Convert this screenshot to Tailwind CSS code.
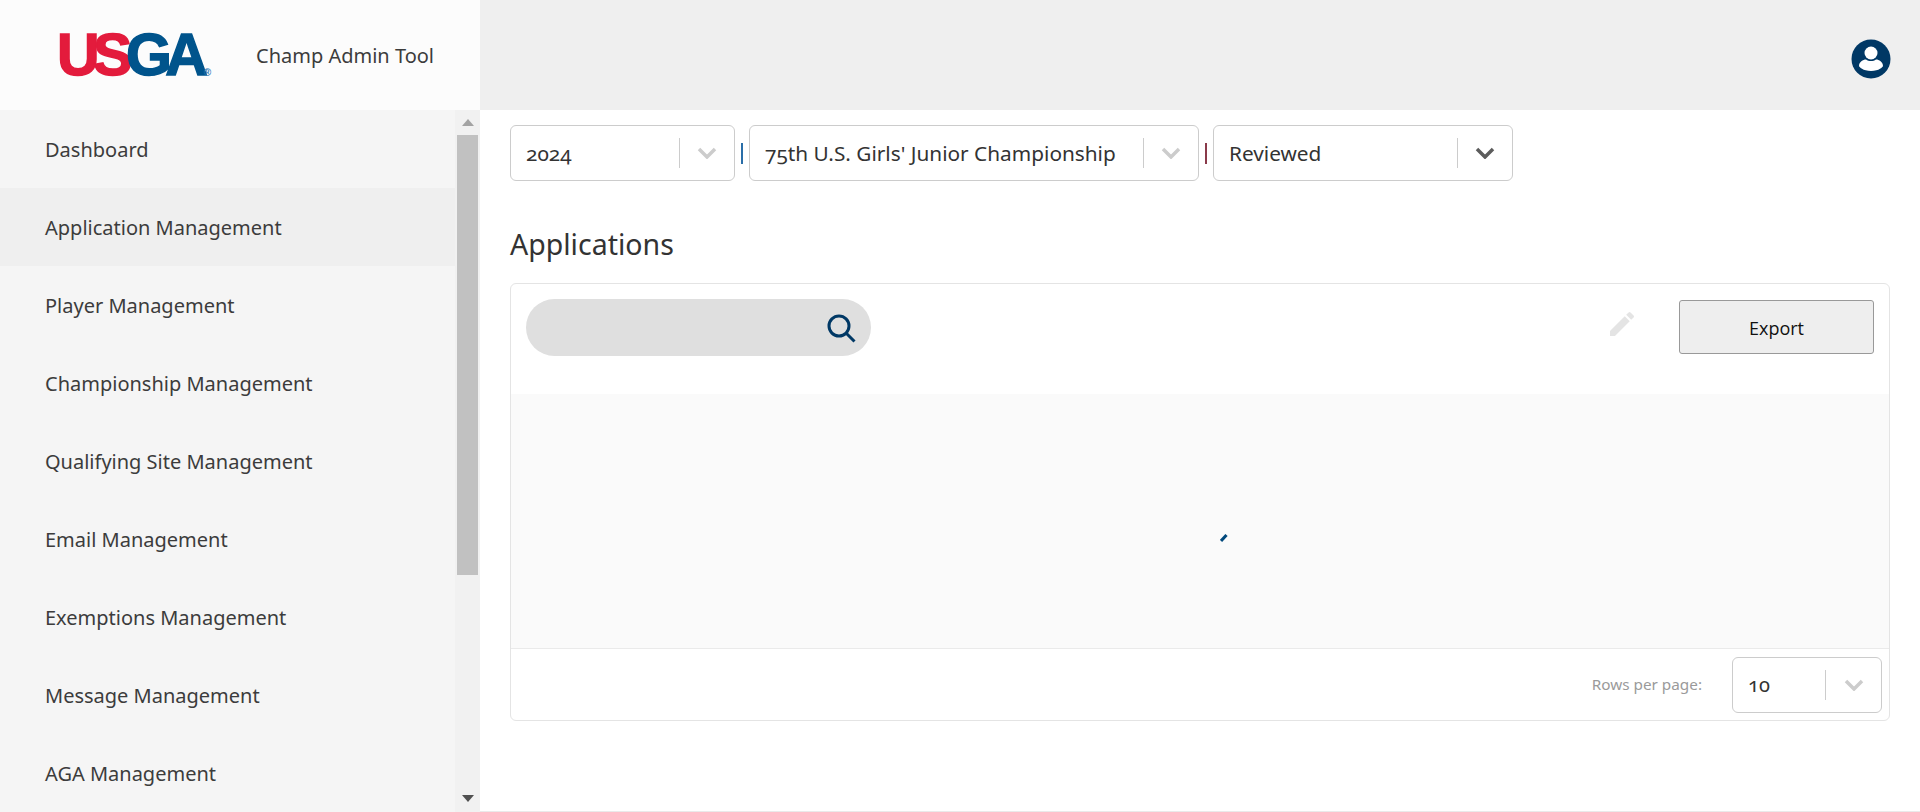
<!DOCTYPE html>
<html lang="en">
<head>
<meta charset="utf-8">
<title>Champ Admin Tool</title>
<script src="https://cdn.jsdelivr.net/npm/@tailwindcss/browser@4"></script>
</head>
<body class="bg-white font-['Noto_Sans',sans-serif] text-[#333] [font-variant-numeric:oldstyle-nums] overflow-hidden">
<div class="flex h-[812px] w-[1920px]">
  <aside class="flex w-[480px] shrink-0 flex-col">
    <div class="flex h-[110px] items-center bg-[#fcfcfc] pl-[57px]">
      <div class="relative flex w-[154px] items-baseline font-['Liberation_Sans',sans-serif] text-[59px] leading-none font-bold tracking-[-6.5px] [-webkit-text-stroke:1.5px]">
        <span class="text-[#e31b3c]">US</span><span class="text-[#00548c]">GA</span>
        <span class="absolute right-0 bottom-[7px] text-[10px] tracking-normal text-[#2c7ab5] [-webkit-text-stroke:0]">®</span>
      </div>
      <span class="ml-[45px] pt-[2px] text-[20px] text-[#3c3c3c]">Champ Admin Tool</span>
    </div>
    <div class="flex min-h-0 flex-1 bg-[#f5f5f5]">
      <nav class="flex-1 text-[20px] text-[#3c3c3c]">
        <a class="flex h-[78px] items-center pt-[2px] pl-[45px]">Dashboard</a>
        <a class="flex h-[78px] items-center bg-[#efefef] pt-[2px] pl-[45px]">Application Management</a>
        <a class="flex h-[78px] items-center pt-[2px] pl-[45px]">Player Management</a>
        <a class="flex h-[78px] items-center pt-[2px] pl-[45px]">Championship Management</a>
        <a class="flex h-[78px] items-center pt-[2px] pl-[45px]">Qualifying Site Management</a>
        <a class="flex h-[78px] items-center pt-[2px] pl-[45px]">Email Management</a>
        <a class="flex h-[78px] items-center pt-[2px] pl-[45px]">Exemptions Management</a>
        <a class="flex h-[78px] items-center pt-[2px] pl-[45px]">Message Management</a>
        <a class="flex h-[78px] items-center pt-[2px] pl-[45px]">AGA Management</a>
      </nav>
      <div class="flex w-[25px] flex-col bg-[#f1f1f1]">
        <div class="flex h-[25px] items-center justify-center">
          <svg width="12" height="7" viewBox="0 0 12 7"><path d="M6 0 12 7H0z" fill="#a3a3a3"/></svg>
        </div>
        <div class="mx-auto h-[440px] w-[21px] bg-[#c1c1c1]"></div>
        <div class="flex-1"></div>
        <div class="flex h-[27px] items-center justify-center">
          <svg width="12" height="7" viewBox="0 0 12 7"><path d="M0 0H12L6 7z" fill="#505050"/></svg>
        </div>
      </div>
    </div>
  </aside>

  <div class="flex min-w-0 flex-1 flex-col">
    <header class="flex h-[110px] items-center justify-end bg-[#efefef] pt-[7px] pr-[29px]">
      <svg width="40" height="40" viewBox="0 0 40 40">
        <circle cx="20" cy="20" r="19.5" fill="#003865"/>
        <circle cx="20" cy="14" r="6.5" fill="#fff"/>
        <path d="M8 27c0-4 4-6.500 7-6.500 1.500 1 3 1.500 5 1.500s3.500-.5 5-1.500c3 0 7 2.500 7 6.500 0 .8-4 5-12 5S8 27.800 8 27z" fill="#fff"/>
      </svg>
    </header>

    <main class="flex-1 border-b border-[#eaeaea] pt-[15px] pl-[30px]">
      <div class="flex h-[56px] items-center text-[20.8px] text-[#333]">
        <div class="flex h-[56px] w-[225px] items-center rounded-md border border-[#ccc] pl-[15px]">
          <span class="flex-1 pt-[2px]">2024</span>
          <span class="h-[30px] w-px bg-[#ccc]"></span>
          <span class="flex w-[54px] justify-center">
            <svg width="20" height="12" viewBox="0 0 20 12"><path d="M2 2l8 8 8-8" fill="none" stroke="#ccc" stroke-width="3.500"/></svg>
          </span>
        </div>
        <span class="ml-[6px] mr-[6px] h-[21px] w-[2px] bg-[#2a6ea8]"></span>
        <div class="flex h-[56px] w-[450px] items-center rounded-md border border-[#ccc] pl-[15px]">
          <span class="flex-1 whitespace-nowrap pt-[2px]">75th U.S. Girls' Junior Championship</span>
          <span class="h-[30px] w-px bg-[#ccc]"></span>
          <span class="flex w-[54px] justify-center">
            <svg width="20" height="12" viewBox="0 0 20 12"><path d="M2 2l8 8 8-8" fill="none" stroke="#ccc" stroke-width="3.500"/></svg>
          </span>
        </div>
        <span class="ml-[6px] mr-[6px] h-[21px] w-[2px] bg-[#8a3a4a]"></span>
        <div class="flex h-[56px] w-[300px] items-center rounded-md border border-[#ccc] pl-[15px]">
          <span class="flex-1 pt-[2px]">Reviewed</span>
          <span class="h-[30px] w-px bg-[#ccc]"></span>
          <span class="flex w-[54px] justify-center">
            <svg width="20" height="12" viewBox="0 0 20 12"><path d="M2 2l8 8 8-8" fill="none" stroke="#5c5c5c" stroke-width="3.500"/></svg>
          </span>
        </div>
      </div>

      <h1 class="mt-[42px] h-[40px] pt-px text-[28.500px] leading-[40px] font-normal text-[#333]">Applications</h1>

      <section class="mt-[20px] flex h-[438px] w-[1380px] flex-col rounded-md border border-[#e4e4e4]">
        <div class="flex h-[110px] items-start pt-[15px] pl-[15px]">
          <div class="flex h-[57px] w-[345px] items-center justify-end rounded-full bg-[#dfdfdf] pr-[14px]">
            <svg width="32" height="32" viewBox="0 0 32 32" fill="none" stroke="#003865" stroke-width="3"><circle cx="14" cy="14" r="10"/><path d="M21 21l8.500 8.500"/></svg>
          </div>
          <div class="flex-1"></div>
          <svg class="mt-[9px] mr-[41px]" width="32" height="32" viewBox="0 0 24 24" fill="#e4e4e4"><path d="M3 17.250V21h3.750L17.810 9.940l-3.750-3.750L3 17.250zM20.710 7.040a1 1 0 0 0 0-1.410l-2.340-2.340a1 1 0 0 0-1.410 0l-1.830 1.830 3.750 3.750 1.830-1.830z"/></svg>
          <button class="mt-px mr-[15px] h-[54px] w-[195px] rounded-[3px] border border-[#999] bg-[#eee] pt-[2px] font-['Open_Sans',sans-serif] text-[18px] text-[#111]">Export</button>
        </div>
        <div class="flex flex-1 items-center justify-center border-b border-[#eaeaea] bg-[#fafafa] pt-[34px] pl-[48px]">
          <svg width="8" height="8" viewBox="0 0 8 8"><path d="M1 7 6.500 1" stroke="#00487c" stroke-width="3"/></svg>
        </div>
        <div class="flex h-[71px] items-center justify-end pr-[7px]">
          <span class="mr-[30px] text-[15.3px] text-[#9a9a9a]">Rows per page:</span>
          <div class="flex h-[56px] w-[150px] items-center rounded-md border border-[#ccc] pl-[15px] text-[20px]">
            <span class="flex-1">10</span>
            <span class="h-[30px] w-px bg-[#ccc]"></span>
            <span class="flex w-[55px] justify-center">
              <svg width="20" height="12" viewBox="0 0 20 12"><path d="M2 2l8 8 8-8" fill="none" stroke="#ccc" stroke-width="3.500"/></svg>
            </span>
          </div>
        </div>
      </section>
    </main>
  </div>
</div>
</body>
</html>
